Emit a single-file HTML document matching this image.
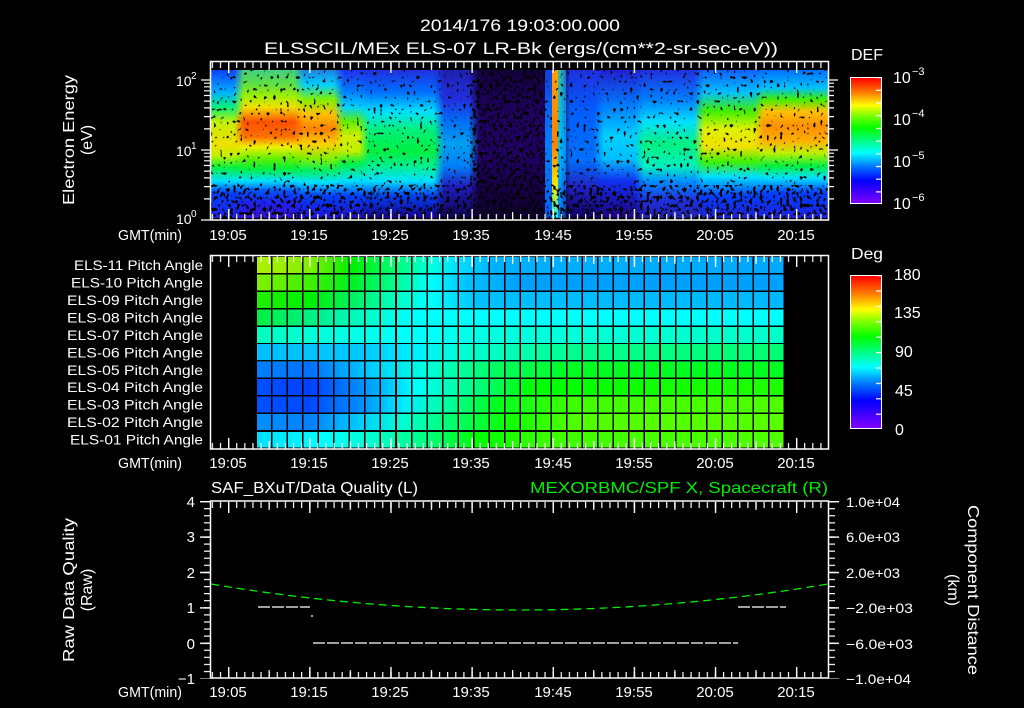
<!DOCTYPE html>
<html><head><meta charset="utf-8"><style>
html,body{margin:0;padding:0;background:#000;}
#pg{position:relative;width:1024px;height:708px;overflow:hidden;background:#000;}
.s{position:absolute;top:70px;height:148px;}
.f{-webkit-mask-image:linear-gradient(90deg,transparent,#000 10px);mask-image:linear-gradient(90deg,transparent,#000 10px);}
.r{position:absolute;left:257px;width:528px;height:17.45px;}
svg{position:absolute;left:0;top:0;}
text{font-family:"Liberation Sans",sans-serif;fill:#fff;}
</style></head><body><div id="pg">

<!-- spectrogram -->
<div class="s" style="left:211px;width:33px;background:linear-gradient(180deg,#1040ff 0%,#00b0ff 15%,#00f080 25%,#c0f000 35%,#f0e000 50%,#c0f000 58%,#00f040 66%,#00e0ff 75%,#0040ff 83%,#2020e0 100%)"></div>
<div class="s f" style="left:234px;width:70px;background:linear-gradient(180deg,#40d080 0%,#60e040 10%,#a0f000 18%,#f0e000 25%,#ff5000 35%,#ff7000 45%,#f0f000 52%,#60f000 60%,#00f040 67%,#00e0ff 75%,#0050ff 82%,#2020f0 90%,#3010d0 100%)"></div>
<div class="s f" style="left:294px;width:50px;background:linear-gradient(180deg,#2080e0 0%,#00d0ff 10%,#80f000 20%,#ffc000 30%,#ff8000 40%,#ffd000 50%,#80f000 60%,#00f060 68%,#00e0ff 76%,#0040ff 85%,#2010d0 100%)"></div>
<div class="s f" style="left:334px;width:35px;background:linear-gradient(180deg,#2030f0 0%,#0080ff 15%,#00d0ff 25%,#60f000 35%,#d0f000 45%,#c0f000 55%,#00f040 63%,#00e0ff 75%,#0040ff 85%,#2010c0 100%)"></div>
<div class="s f" style="left:359px;width:85px;background:linear-gradient(180deg,#2030e0 0%,#0070ff 15%,#00e0ff 28%,#00f080 40%,#00f040 55%,#00f090 65%,#00e0ff 75%,#0040f0 85%,#180090 100%)"></div>
<div class="s f" style="left:434px;width:45px;background:linear-gradient(180deg,#2020b0 0%,#2030e0 20%,#0070f8 35%,#00a0f0 50%,#0080f8 65%,#2020c0 78%,#100050 100%)"></div>
<div class="s f" style="left:469px;width:80px;background:linear-gradient(180deg,#140040 0%,#200060 30%,#200060 60%,#0c0028 100%)"></div>
<div class="s" style="left:545px;width:8px;background:linear-gradient(180deg,#1040e0,#0080ff 50%,#0060ff)"></div>
<div class="s" style="left:552px;width:7px;background:linear-gradient(180deg,#ffa000 0%,#ff8000 50%,#f0f000 80%,#00f0f0 100%)"></div>
<div class="s" style="left:558px;width:8px;background:linear-gradient(180deg,#30c0a0,#00c0f0 50%,#0080ff)"></div>
<div class="s f" style="left:560px;width:44px;background:linear-gradient(180deg,#2030e0 0%,#0060ff 30%,#0070ff 60%,#2020c0 80%,#100060 100%)"></div>
<div class="s f" style="left:594px;width:50px;background:linear-gradient(180deg,#2020d0 0%,#0080ff 25%,#00d0ff 45%,#00c0ff 60%,#1030f0 75%,#200080 100%)"></div>
<div class="s f" style="left:634px;width:70px;background:linear-gradient(180deg,#2030e0 0%,#0080ff 20%,#00e0ff 35%,#00f080 50%,#00f0c0 65%,#0090ff 75%,#2030e0 88%,#2020b0 100%)"></div>
<div class="s f" style="left:694px;width:70px;background:linear-gradient(180deg,#1060ff 0%,#00c0ff 15%,#40f000 28%,#e0f000 40%,#f0e000 52%,#40f000 62%,#00e0ff 72%,#0040ff 85%,#2020d0 100%)"></div>
<div class="s f" style="left:754px;width:74px;background:linear-gradient(180deg,#0070ff 0%,#00c0ff 12%,#40f000 20%,#ffc000 28%,#ff9000 38%,#ffb000 48%,#c0f000 56%,#00f040 65%,#00e0ff 73%,#0040ff 83%,#2020e0 100%)"></div>

<!-- pitch angle rows -->
<div class="r" style="top:257px;background:linear-gradient(90deg,#b0f000 0%,#80f000 10%,#00f000 18%,#00ff70 26%,#00ffe0 33%,#00e0ff 38%,#00b0ff 45%,#00a8ff 100%)"></div>
<div class="r" style="top:274.45px;background:linear-gradient(90deg,#80f000 0%,#40f000 10%,#00f020 18%,#00ff90 26%,#00ffff 33%,#00c0ff 40%,#00a0ff 50%,#00a0ff 100%)"></div>
<div class="r" style="top:291.9px;background:linear-gradient(90deg,#20f000 0%,#00f000 10%,#00f060 18%,#00ffc0 26%,#00ffff 33%,#00c0ff 42%,#00b8ff 100%)"></div>
<div class="r" style="top:309.35px;background:linear-gradient(90deg,#00f040 0%,#00f090 12%,#00ffd0 22%,#00ffff 30%,#00ffff 100%)"></div>
<div class="r" style="top:326.8px;background:linear-gradient(90deg,#00ffc0 0%,#00ffe0 15%,#00ffff 30%,#00ffe0 45%,#00ffc8 100%)"></div>
<div class="r" style="top:344.25px;background:linear-gradient(90deg,#00c0ff 0%,#00c8ff 20%,#00f0ff 30%,#00ffd0 40%,#00ff90 60%,#00ff70 100%)"></div>
<div class="r" style="top:361.7px;background:linear-gradient(90deg,#0080ff 0%,#0070ff 10%,#00d0ff 22%,#00ffe0 32%,#00ff60 45%,#00ff20 60%,#00ff20 100%)"></div>
<div class="r" style="top:379.15px;background:linear-gradient(90deg,#0050ff 0%,#0040ff 10%,#0090ff 20%,#00ffff 30%,#00ff90 40%,#00ff00 52%,#20ff00 100%)"></div>
<div class="r" style="top:396.6px;background:linear-gradient(90deg,#0050ff 0%,#0048ff 10%,#0090ff 20%,#00f0ff 28%,#00ffa0 36%,#00ff20 45%,#40ff00 60%,#50ff00 100%)"></div>
<div class="r" style="top:414.05px;background:linear-gradient(90deg,#0090ff 0%,#0080ff 10%,#00d0ff 20%,#00ffd0 28%,#00ff60 38%,#10ff00 48%,#50ff00 60%,#58ff00 100%)"></div>
<div class="r" style="top:431.5px;background:linear-gradient(90deg,#00e0ff 0%,#00ffff 12%,#00ffd0 22%,#00ff80 32%,#00ff00 42%,#40ff00 55%,#50ff00 100%)"></div>
<div style="position:absolute;left:257px;top:257px;width:528px;height:192px;background:repeating-linear-gradient(90deg,transparent 0 14px,#000 14px 15.53px),repeating-linear-gradient(180deg,transparent 0 16px,#000 16px 17.45px)"></div>

<!-- colorbars -->
<div style="position:absolute;left:850px;top:77px;width:32px;height:127px;box-sizing:border-box;border:1.5px solid #fff;background:linear-gradient(180deg,#ff0000 0%,#ff8000 12%,#ffff00 22%,#80ff00 30%,#00ff00 40%,#00ff80 50%,#00ffff 60%,#0080ff 70%,#0000ff 82%,#8000ff 100%)"></div>
<div style="position:absolute;left:850px;top:275px;width:32px;height:154px;box-sizing:border-box;border:1.5px solid #fff;background:linear-gradient(180deg,#ff0000 0%,#ff8000 12%,#ffff00 22%,#80ff00 30%,#00ff00 40%,#00ff80 50%,#00ffff 60%,#0080ff 70%,#0000ff 82%,#8000ff 100%)"></div>

<svg width="1024" height="708" viewBox="0 0 1024 708">
<defs>
<filter id="nz" x="0" y="0" width="100%" height="100%"><feTurbulence type="fractalNoise" baseFrequency="0.3 0.25" numOctaves="1" seed="5"/><feColorMatrix type="matrix" values="0 0 0 0 0  0 0 0 0 0  0 0 0 0 0  -14 0 0 0 5.0"/></filter>
<filter id="nz2" x="0" y="0" width="100%" height="100%"><feTurbulence type="fractalNoise" baseFrequency="0.3 0.25" numOctaves="1" seed="9"/><feColorMatrix type="matrix" values="0 0 0 0 0  0 0 0 0 0  0 0 0 0 0  -14 0 0 0 6.2"/></filter>
<pattern id="tm" x="228" y="0" width="8.114" height="6" patternUnits="userSpaceOnUse"><rect x="0" y="0" width="1.2" height="6" fill="#fff"/></pattern>
<pattern id="tM" x="228" y="0" width="81.14" height="11" patternUnits="userSpaceOnUse"><rect x="0" y="0" width="1.4" height="11" fill="#fff"/></pattern>
<pattern id="t5" x="268.57" y="0" width="81.14" height="8" patternUnits="userSpaceOnUse"><rect x="0" y="0" width="1.2" height="8" fill="#fff"/></pattern>
<pattern id="ym" x="0" y="501" width="6" height="7.08" patternUnits="userSpaceOnUse"><rect x="0" y="0" width="6" height="1.2" fill="#fff"/></pattern>
<pattern id="yM" x="0" y="501" width="10" height="35.4" patternUnits="userSpaceOnUse"><rect x="0" y="0" width="10" height="1.4" fill="#fff"/></pattern>
<pattern id="cb" x="0" y="77" width="6" height="12.7" patternUnits="userSpaceOnUse"><rect x="0" y="0" width="6" height="1.2" fill="#fff"/></pattern>
<pattern id="cb2" x="0" y="275" width="6" height="15.4" patternUnits="userSpaceOnUse"><rect x="0" y="0" width="6" height="1.2" fill="#fff"/></pattern>
</defs>

<!-- noise speckle -->
<rect x="211" y="70" width="617" height="148" filter="url(#nz)"/>
<rect x="211" y="185" width="617" height="33" filter="url(#nz2)"/>
<rect x="470" y="70" width="75" height="115" filter="url(#nz2)"/>

<!-- Titles -->
<text x="420" y="31" font-size="17" textLength="200" lengthAdjust="spacingAndGlyphs">2014/176 19:03:00.000</text>
<text x="264" y="54" font-size="17" textLength="514" lengthAdjust="spacingAndGlyphs">ELSSCIL/MEx ELS-07 LR-Bk  (ergs/(cm**2-sr-sec-eV))</text>

<!-- Panel 1 frame -->
<rect x="210.5" y="61.5" width="618" height="158.5" fill="none" stroke="#fff" stroke-width="1.5"/>
<rect x="211" y="62" width="617" height="6" fill="url(#tm)"/>
<rect x="211" y="62" width="617" height="11" fill="url(#tM)"/>
<rect x="211" y="62" width="617" height="8" fill="url(#t5)"/>
<rect x="211" y="214" width="617" height="6" fill="url(#tm)"/>
<rect x="211" y="209" width="617" height="11" fill="url(#tM)"/>
<rect x="211" y="212" width="617" height="8" fill="url(#t5)"/>
<g stroke="#fff" stroke-width="1.2">
<path d="M201 80H210M201 150H210M201 220H210M828 80H838M828 150H838"/>
<path d="M204 83.2H210M204 86.8H210M204 90.8H210M204 95.5H210M204 101.1H210M204 107.9H210M204 116.6H210M204 128.9H210M204 153.2H210M204 156.8H210M204 160.8H210M204 165.5H210M204 171.1H210M204 177.9H210M204 186.6H210M204 198.9H210"/>
<path d="M828 83.2H834M828 86.8H834M828 90.8H834M828 95.5H834M828 101.1H834M828 107.9H834M828 116.6H834M828 128.9H834M828 153.2H834M828 156.8H834M828 160.8H834M828 165.5H834M828 171.1H834M828 177.9H834M828 186.6H834M828 198.9H834"/>
</g>
<text x="176" y="86" font-size="14">10</text><text x="191" y="79" font-size="10">2</text>
<text x="176" y="156" font-size="14">10</text><text x="191" y="149" font-size="10">1</text>
<text x="176" y="224" font-size="14">10</text><text x="191" y="217" font-size="10">0</text>
<text transform="translate(74,140) rotate(-90)" text-anchor="middle" font-size="16" textLength="130" lengthAdjust="spacingAndGlyphs">Electron Energy</text>
<text transform="translate(92,140) rotate(-90)" text-anchor="middle" font-size="16">(eV)</text>

<!-- time labels -->
<g font-size="15" text-anchor="middle">
<text x="150" y="240" textLength="64" lengthAdjust="spacingAndGlyphs">GMT(min)</text>
<text x="228" y="240">19:05</text><text x="309" y="240">19:15</text><text x="390" y="240">19:25</text><text x="471" y="240">19:35</text><text x="553" y="240">19:45</text><text x="634" y="240">19:55</text><text x="715" y="240">20:05</text><text x="796" y="240">20:15</text>
<text x="150" y="468" textLength="64" lengthAdjust="spacingAndGlyphs">GMT(min)</text>
<text x="228" y="468">19:05</text><text x="309" y="468">19:15</text><text x="390" y="468">19:25</text><text x="471" y="468">19:35</text><text x="553" y="468">19:45</text><text x="634" y="468">19:55</text><text x="715" y="468">20:05</text><text x="796" y="468">20:15</text>
<text x="150" y="697" textLength="64" lengthAdjust="spacingAndGlyphs">GMT(min)</text>
<text x="228" y="697">19:05</text><text x="309" y="697">19:15</text><text x="390" y="697">19:25</text><text x="471" y="697">19:35</text><text x="553" y="697">19:45</text><text x="634" y="697">19:55</text><text x="715" y="697">20:05</text><text x="796" y="697">20:15</text>
</g>

<!-- colorbar labels -->
<text x="851" y="60" font-size="16" textLength="32" lengthAdjust="spacingAndGlyphs">DEF</text>
<text x="851" y="259" font-size="16" textLength="32" lengthAdjust="spacingAndGlyphs">Deg</text>
<rect x="876" y="77" width="6" height="127" fill="url(#cb)"/>
<rect x="876" y="275" width="6" height="154" fill="url(#cb2)"/>
<g font-size="16">
<text x="893" y="83">10</text><text x="912" y="75" font-size="11">−3</text>
<text x="893" y="125">10</text><text x="912" y="117" font-size="11">−4</text>
<text x="893" y="167">10</text><text x="912" y="159" font-size="11">−5</text>
<text x="893" y="209">10</text><text x="912" y="201" font-size="11">−6</text>
<text x="894" y="280">180</text><text x="894" y="318">135</text><text x="895" y="357">90</text><text x="895" y="396">45</text><text x="895" y="435">0</text>
</g>

<!-- Panel 2 frame -->
<rect x="210.5" y="255.5" width="618" height="193.5" fill="none" stroke="#fff" stroke-width="1.5"/>
<rect x="211" y="256" width="617" height="6" fill="url(#tm)"/>
<rect x="211" y="256" width="617" height="11" fill="url(#tM)"/>
<rect x="211" y="256" width="617" height="8" fill="url(#t5)"/>
<rect x="211" y="443" width="617" height="6" fill="url(#tm)"/>
<rect x="211" y="438" width="617" height="11" fill="url(#tM)"/>
<rect x="211" y="441" width="617" height="8" fill="url(#t5)"/>
<g font-size="13.5" text-anchor="end">
<text x="203" y="270" textLength="129" lengthAdjust="spacingAndGlyphs">ELS-11 Pitch Angle</text>
<text x="203" y="287.5" textLength="132" lengthAdjust="spacingAndGlyphs">ELS-10 Pitch Angle</text>
<text x="203" y="305" textLength="136" lengthAdjust="spacingAndGlyphs">ELS-09 Pitch Angle</text>
<text x="203" y="322.4" textLength="136" lengthAdjust="spacingAndGlyphs">ELS-08 Pitch Angle</text>
<text x="203" y="339.9" textLength="136" lengthAdjust="spacingAndGlyphs">ELS-07 Pitch Angle</text>
<text x="203" y="357.3" textLength="136" lengthAdjust="spacingAndGlyphs">ELS-06 Pitch Angle</text>
<text x="203" y="374.8" textLength="136" lengthAdjust="spacingAndGlyphs">ELS-05 Pitch Angle</text>
<text x="203" y="392.2" textLength="136" lengthAdjust="spacingAndGlyphs">ELS-04 Pitch Angle</text>
<text x="203" y="409.7" textLength="136" lengthAdjust="spacingAndGlyphs">ELS-03 Pitch Angle</text>
<text x="203" y="427.1" textLength="136" lengthAdjust="spacingAndGlyphs">ELS-02 Pitch Angle</text>
<text x="203" y="444.6" textLength="133" lengthAdjust="spacingAndGlyphs">ELS-01 Pitch Angle</text>
</g>

<!-- Panel 3 -->
<text x="211" y="493" font-size="16" textLength="207" lengthAdjust="spacingAndGlyphs">SAF_BXuT/Data Quality (L)</text>
<text x="530" y="493" font-size="16" textLength="298" lengthAdjust="spacingAndGlyphs" style="fill:#00ee00">MEXORBMC/SPF X, Spacecraft (R)</text>
<rect x="210.5" y="501" width="618" height="177" fill="none" stroke="#fff" stroke-width="1.5"/>
<rect x="211" y="502" width="617" height="6" fill="url(#tm)"/>
<rect x="211" y="502" width="617" height="11" fill="url(#tM)"/>
<rect x="211" y="502" width="617" height="8" fill="url(#t5)"/>
<rect x="211" y="672" width="617" height="6" fill="url(#tm)"/>
<rect x="211" y="667" width="617" height="11" fill="url(#tM)"/>
<rect x="211" y="670" width="617" height="8" fill="url(#t5)"/>
<rect x="204" y="500.5" width="6" height="178" fill="url(#ym)"/>
<rect x="200" y="500.5" width="10" height="178" fill="url(#yM)"/>
<rect x="829" y="500.5" width="6" height="178" fill="url(#ym)"/>
<rect x="829" y="500.5" width="10" height="178" fill="url(#yM)"/>
<g font-size="15" text-anchor="end">
<text x="195" y="507">4</text><text x="195" y="542">3</text><text x="195" y="578">2</text><text x="195" y="613">1</text><text x="195" y="649">0</text><text x="195" y="684">−1</text>
</g>
<g font-size="14">
<text x="846" y="507" textLength="54" lengthAdjust="spacingAndGlyphs">1.0e+04</text>
<text x="846" y="542" textLength="54" lengthAdjust="spacingAndGlyphs">6.0e+03</text>
<text x="846" y="578" textLength="54" lengthAdjust="spacingAndGlyphs">2.0e+03</text>
<text x="846" y="613" textLength="67" lengthAdjust="spacingAndGlyphs">−2.0e+03</text>
<text x="846" y="649" textLength="67" lengthAdjust="spacingAndGlyphs">−6.0e+03</text>
<text x="846" y="684" textLength="65" lengthAdjust="spacingAndGlyphs">−1.0e+04</text>
</g>
<text transform="translate(74,590) rotate(-90)" text-anchor="middle" font-size="16" textLength="144" lengthAdjust="spacingAndGlyphs">Raw Data Quality</text>
<text transform="translate(92,590) rotate(-90)" text-anchor="middle" font-size="16">(Raw)</text>
<text transform="translate(968,590) rotate(90)" text-anchor="middle" font-size="16" textLength="170" lengthAdjust="spacingAndGlyphs">Component Distance</text>
<text transform="translate(948,590) rotate(90)" text-anchor="middle" font-size="16">(km)</text>

<path d="M211 584 Q520 636 828 584" fill="none" stroke="#00ee00" stroke-width="1.3" stroke-dasharray="8 5"/>
<g stroke="#fff" stroke-width="1.2" fill="none">
<path d="M258 607H310" stroke-dasharray="12 2"/>
<path d="M313 643H738" stroke-dasharray="12 2"/>
<path d="M738 607H786" stroke-dasharray="12 2"/>
<path d="M312 615v2"/>
</g>
</svg>
</div></body></html>
